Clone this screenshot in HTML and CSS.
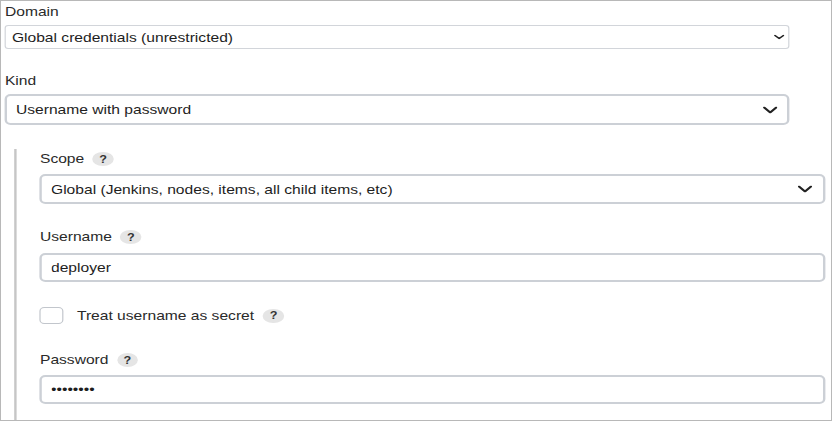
FILE: index.html
```html
<!DOCTYPE html>
<html lang="en">
<head>
    <meta charset="UTF-8">
    <title>New credentials</title>
    <link rel="stylesheet" href="styles.css">
</head>
<body>

<div class="frame">
    <form class="sheet">
        <label class="field-label" for="domain">Domain</label>
        <div class="select-box select-box--legacy">
            <select id="domain">
                <option>Global credentials (unrestricted)</option>
            </select>
            <svg class="chevron chevron--small" viewBox="0 0 9 5" width="9" height="5"><path d="M1 1 L4.5 4 L8 1"/></svg>
        </div>

        <label class="field-label field-label--kind" for="kind">Kind</label>
        <div class="select-box select-box--kind">
            <select id="kind">
                <option>Username with password</option>
            </select>
            <svg class="chevron" viewBox="0 0 12 7" width="12" height="7"><path d="M1 1 L6 6 L11 1"/></svg>
        </div>

        <!-- fields of the chosen kind -->
        <div class="nested">
            <div class="field-label">
                <label for="scope">Scope</label>
                <span class="help">?</span>
            </div>
            <div class="select-box select-box--scope">
                <select id="scope">
                    <option>Global (Jenkins, nodes, items, all child items, etc)</option>
                </select>
                <svg class="chevron" viewBox="0 0 12 7" width="12" height="7"><path d="M1 1 L6 6 L11 1"/></svg>
            </div>

            <div class="field-label field-label--gap">
                <label for="username">Username</label>
                <span class="help">?</span>
            </div>
            <input class="text-input" id="username" type="text" value="deployer">

            <div class="check-row">
                <input class="checkbox" id="secret" type="checkbox">
                <label for="secret">Treat username as secret</label>
                <span class="help">?</span>
            </div>

            <div class="field-label field-label--password">
                <label for="password">Password</label>
                <span class="help">?</span>
            </div>
            <input class="text-input text-input--password" id="password" type="password" value="deployer">
        </div>
    </form>
</div>

</body>
</html>
```

FILE: styles.css
```css
body {
    margin: 0;
    padding: 0;
    background-color: #fff;
    font-family: 'Liberation Sans', Arial, sans-serif;
    font-size: 13px;
    color: #2a2a2a;
}

.frame {
    width: 832px;
    height: 421px;
    box-sizing: border-box;
    border: 1px solid #b8b8b8;
    overflow: hidden;
}

.sheet {
    width: 691.6px;
    box-sizing: border-box;
    padding: 2.5px 4.2px 0 3.3px;
    margin: 0;
    transform: scaleX(1.2);
    transform-origin: 0 0;
}

.field-label {
    display: flex;
    align-items: center;
    gap: 7px;
    height: 16px;
    line-height: 16px;
    color: #2a2a2a;
}

.field-label--kind {
    margin-top: 23.5px;
}

.field-label--gap {
    margin-top: 25px;
}

.field-label--password {
    margin-top: 27.3px;
}

.help {
    display: inline-flex;
    align-items: center;
    justify-content: center;
    width: 17.5px;
    height: 14px;
    border-radius: 50%;
    background-color: #e5e5e5;
    font-size: 10.5px;
    font-weight: bold;
    line-height: 1;
    color: #333;
}

/* selects */
.select-box {
    position: relative;
    margin-top: 5.5px;
}

.select-box select {
    display: block;
    width: 100%;
    height: 31px;
    box-sizing: border-box;
    margin: 0;
    padding: 0 30px 0 7.2px;
    appearance: none;
    -webkit-appearance: none;
    border: 2px solid #ccd0d6;
    border-radius: 5px;
    background-color: #fff;
    font: inherit;
    color: #1e1e1e;
}

.select-box--legacy {
    width: 654px;
}

.select-box--legacy select {
    height: 24px;
    padding-left: 4.8px;
    border-width: 1px;
    border-color: #d2d5da;
    border-radius: 3px;
}

.select-box--kind {
    width: 653.5px;
}

.select-box--scope {
    margin-top: 7px;
}

.select-box--scope select {
    height: 30px;
}

.chevron {
    position: absolute;
    top: 50%;
    right: 10px;
    transform: translateY(-50%);
    fill: none;
    stroke: #222;
    stroke-width: 1.8;
    stroke-linecap: round;
    stroke-linejoin: round;
}

.chevron--small {
    right: 4px;
    stroke-width: 1.5;
}

.select-box--scope .chevron {
    right: 11px;
}

/* nested block with the grey rail on the left */
.nested {
    margin: 24px 0 0 7.5px;
    padding: 2px 0 40px 19.7px;
    border-left: 2px solid #c6c6c6;
}

.text-input {
    display: block;
    width: 100%;
    height: 29px;
    box-sizing: border-box;
    margin: 8px 0 0 0;
    padding: 0 7.2px;
    border: 2px solid #ccd0d6;
    border-radius: 5px;
    font: inherit;
    color: #1e1e1e;
    outline: none;
}

.text-input--password {
    margin-top: 7.7px;
}

.check-row {
    display: flex;
    align-items: center;
    height: 18px;
    margin-top: 24.5px;
}

.checkbox {
    appearance: none;
    -webkit-appearance: none;
    width: 20px;
    height: 17.8px;
    box-sizing: border-box;
    margin: 0 10.8px 0 0;
    border: 1.5px solid #c2c6cc;
    border-radius: 4px;
    background-color: #fff;
}

.check-row .help {
    margin-left: 7.5px;
}
```
